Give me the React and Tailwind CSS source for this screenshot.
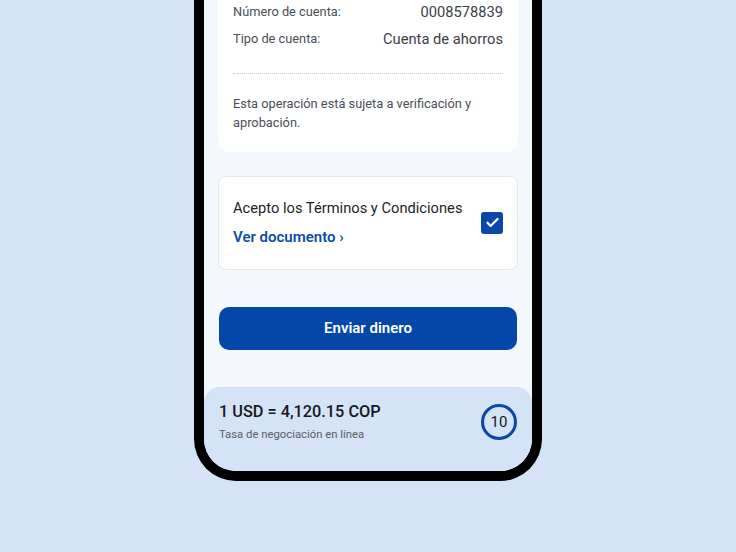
import React, { useState } from 'react';

const Row = ({ label, value }) => (
  <div className="flex items-center justify-between h-[24px]">
    <span className="text-[12.8px] text-[#4a4f57]">{label}</span>
    <span className="text-[14.7px] text-[#3b4048]">{value}</span>
  </div>
);

const App = () => {
  const [accepted, setAccepted] = useState(true);

  return (
    <div className="w-[736px] h-[552px] bg-[#d4e4f6] flex justify-center overflow-hidden" style={{ fontFamily: 'Roboto, "Noto Sans", sans-serif' }}>
      <div className="w-[348px] h-[481px] border-x-[10px] border-b-[10px] border-black rounded-b-[42px] overflow-hidden">
        <div className="h-full bg-[#f4f8fd] flex flex-col rounded-b-[32px] overflow-hidden">
          <div className="px-[14px]">
            {/* account details */}
            <div className="bg-white rounded-b-xl px-[15px] pb-[20px]">
              <div className="flex flex-col gap-[3px]">
                <Row label="Número de cuenta:" value="0008578839" />
                <Row label="Tipo de cuenta:" value="Cuenta de ahorros" />
              </div>
              <div className="mt-[22px] border-t border-dotted border-[#c3c9d2]" />
              <p className="mt-[20px] text-[12.8px] leading-[19px] text-[#4a4f57]">
                Esta operación está sujeta a verificación y aprobación.
              </p>
            </div>

            {/* terms */}
            <div className="mt-[24px] bg-white border border-[#e3e8ef] rounded-lg pl-[14px] pr-[14px] pt-[21px] pb-[22px] flex items-center justify-between">
              <div className="flex flex-col gap-[9px]">
                <span className="text-[14.7px] leading-[20px] text-[#1c1f24]">Acepto los Términos y Condiciones</span>
                <span className="text-[15px] leading-[20px] font-semibold text-[#0d4ea6]">Ver documento ›</span>
              </div>
              <button
                type="button"
                onClick={() => setAccepted(!accepted)}
                className={`w-[22px] h-[22px] rounded-[3px] flex items-center justify-center ${accepted ? 'bg-[#0a47a8]' : 'bg-white border-2 border-[#0a47a8]'}`}
              >
                {accepted && (
                  <svg width="15" height="15" viewBox="0 0 24 24" fill="none" stroke="white" strokeWidth="3.6" strokeLinecap="round" strokeLinejoin="round">
                    <path d="M4 12.5l5 5L20 6.5" />
                  </svg>
                )}
              </button>
            </div>

            <button
              type="button"
              className="mt-[37px] mx-[1px] w-[298px] h-[43px] rounded-[10px] bg-[#0547a8] text-white text-[15px] font-semibold"
            >
              Enviar dinero
            </button>
          </div>

          {/* rate panel */}
          <div className="mt-[37px] flex-1 bg-[#d4e3f6] rounded-t-[16px] border-t border-[#c9dbf1] pl-[15px] pr-[15px] pt-[13px] flex items-start justify-between">
            <div className="flex flex-col gap-[4px]">
              <span className="text-[16.3px] leading-[22px] font-medium text-[#15181d]">1 USD = 4,120.15 COP</span>
              <span className="text-[11.3px] leading-[16px] text-[#5a6069]">Tasa de negociación en línea</span>
            </div>
            <div className="mt-[3px] w-[36px] h-[36px] rounded-full border-[3.5px] border-[#0a47a8] flex items-center justify-center text-[15px] text-[#15181d]">
              10
            </div>
          </div>
        </div>
      </div>
    </div>
  );
};

export default App;
